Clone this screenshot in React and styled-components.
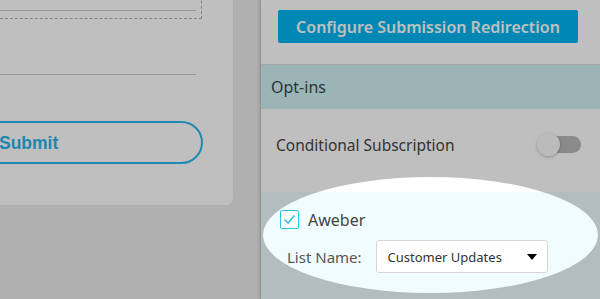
import React from "react";
import styled, { createGlobalStyle } from "styled-components";

const Global = createGlobalStyle`
  html, body { margin: 0; padding: 0; }
  body {
    width: 600px;
    height: 299px;
    overflow: hidden;
    background: #ebebeb;
    font-family: "Noto Sans", "Open Sans", sans-serif;
  }
  #root { width: 600px; height: 299px; position: relative; overflow: hidden; }
`;

const Page = styled.div`
  display: flex;
  align-items: flex-start;
  width: 600px;
  height: 299px;
  background: #ebebeb;
`;

const Card = styled.div`
  width: 203px;
  height: 225px;
  margin-top: -20px;
  padding-right: 30px;
  background: #ffffff;
  border-bottom-right-radius: 7px;
  display: flex;
  flex-direction: column;
  align-items: flex-start;
  flex-shrink: 0;
  overflow: hidden;
`;

const DashedBox = styled.div`
  width: 202px;
  height: 39px;
  border: 1px dashed #b0b0b0;
  border-left: none;
  box-sizing: border-box;
  padding-top: 29px;
`;

const Underline = styled.div`
  width: ${(p) => p.$w || 196}px;
  height: 1px;
  background: #cacaca;
  margin-top: ${(p) => p.$mt || 0}px;
`;

const Pill = styled.div`
  margin-top: 46px;
  margin-left: -24px;
  width: 227px;
  height: 43px;
  box-sizing: border-box;
  border: 2px solid #29b8ef;
  border-radius: 22px;
  display: flex;
  align-items: center;
  padding: 2px 0 0 21px;
  font-family: "Liberation Sans", Arial, sans-serif;
  font-weight: 700;
  font-size: 17.5px;
  color: #2ab5ea;
`;

const Gutter = styled.div`
  width: 27px;
  flex-shrink: 0;
`;

const Panel = styled.div`
  flex: 1;
  height: 299px;
  background: #ffffff;
  border-left: 1px solid #c4c4c4;
  box-shadow: -1px 0 3px rgba(0, 0, 0, 0.12);
  display: flex;
  flex-direction: column;
`;

const TopSection = styled.div`
  height: 65px;
  box-sizing: border-box;
  border-bottom: 1px solid #dcdcdc;
  padding: 10px 0 0 17px;
`;

const PrimaryButton = styled.button`
  width: 300px;
  height: 33px;
  border: none;
  border-radius: 2px;
  background: #00b5f1;
  color: #ffffff;
  font-family: "Noto Sans", "Open Sans", sans-serif;
  font-weight: 600;
  font-size: 16px;
  padding: 0;
  cursor: pointer;
`;

const SectionHeader = styled.div`
  height: 44px;
  background: #cff0f3;
  display: flex;
  align-items: center;
  padding-left: 10px;
  font-size: 16px;
  color: #37494b;
`;

const SwitchRow = styled.div`
  height: 83px;
  box-sizing: border-box;
  padding: 24px 19px 0 15px;
  display: flex;
  align-items: flex-start;
  justify-content: space-between;
  font-size: 15.5px;
  color: #464646;
`;

const Label = styled.span`
  line-height: 24px;
`;

const Track = styled.div`
  position: relative;
  width: 41px;
  height: 17px;
  margin-top: 3px;
  border-radius: 9px;
  background: #b8b8b8;
`;

const Knob = styled.div`
  position: absolute;
  left: -3px;
  top: -3px;
  width: 23px;
  height: 23px;
  border-radius: 50%;
  background: #fafafa;
  box-shadow: 0 1px 3px rgba(0, 0, 0, 0.25);
`;

const OptSection = styled.div`
  flex: 1;
  background: #f0fcfe;
  padding: 18px 0 0 19px;
  display: flex;
  flex-direction: column;
`;

const CheckRow = styled.label`
  display: flex;
  align-items: center;
  gap: 9px;
  font-size: 16px;
  color: #444;
  height: 19px;
`;

const CheckBox = styled.span`
  width: 19px;
  height: 19px;
  box-sizing: border-box;
  border: 1.5px solid #2ec5e2;
  border-radius: 2px;
  background: #fff;
  display: flex;
  align-items: center;
  justify-content: center;
`;

const FieldRow = styled.div`
  display: flex;
  align-items: center;
  margin-top: 11px;
  padding-left: 7px;
  gap: 14px;
`;

const FieldLabel = styled.span`
  font-size: 15px;
  color: #555;
`;

const Select = styled.div`
  width: 172px;
  height: 33px;
  box-sizing: border-box;
  border: 1px solid #d6d6d6;
  border-radius: 3px;
  background: #fff;
  display: flex;
  align-items: center;
  justify-content: space-between;
  padding: 0 10px 0 11px;
  font-size: 13px;
  color: #333;
`;

const Caret = styled.span`
  width: 0;
  height: 0;
  border-left: 5px solid transparent;
  border-right: 5px solid transparent;
  border-top: 6px solid #000;
  margin-top: 1px;
`;

const Spotlight = styled.div`
  position: absolute;
  left: 263px;
  top: 177px;
  width: 335px;
  height: 116px;
  border-radius: 50%;
  box-shadow: 0 0 0 2000px rgba(0, 0, 0, 0.25);
  pointer-events: none;
`;

export default function App() {
  return (
    <>
      <Global />
      <Page>
        <Card>
          <DashedBox>
            <Underline $w={196} />
          </DashedBox>
          <Underline $w={196} $mt={55} />
          <Pill>Submit</Pill>
        </Card>
        <Gutter />
        <Panel>
          <TopSection>
            <PrimaryButton>Configure Submission Redirection</PrimaryButton>
          </TopSection>
          <SectionHeader>Opt-ins</SectionHeader>
          <SwitchRow>
            <Label>Conditional Subscription</Label>
            <Track>
              <Knob />
            </Track>
          </SwitchRow>
          <OptSection>
            <CheckRow>
              <CheckBox>
                <svg width="13" height="11" viewBox="0 0 13 11">
                  <path d="M1.5 5.5 L5 9 L11.5 1.5" fill="none" stroke="#2ec5e2" strokeWidth="1.6" />
                </svg>
              </CheckBox>
              Aweber
            </CheckRow>
            <FieldRow>
              <FieldLabel>List Name:</FieldLabel>
              <Select>
                Customer Updates
                <Caret />
              </Select>
            </FieldRow>
          </OptSection>
        </Panel>
      </Page>
      <Spotlight />
    </>
  );
}
